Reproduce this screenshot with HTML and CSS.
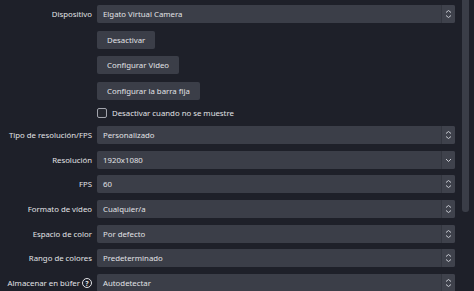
FILE: index.html
```html
<!DOCTYPE html>
<html lang="es">
<head>
<meta charset="utf-8">
<link rel="stylesheet" href="styles.css">
</head>
<body>
<div class="page">
  <div class="form">
    <div class="row r1">
      <div class="label">Dispositivo</div>
      <div class="combo"><span class="val">Elgato Virtual Camera</span><span class="arrow"><svg width="7" height="10" viewBox="0 0 7 10"><path d="M1 3.5 L3.5 1.5 L6 3.5 M1 6.5 L3.5 8.5 L6 6.5" fill="none" stroke="#c9cbd2" stroke-width="1"/></svg></span></div>
    </div>
    <div class="row r2">
      <div class="label"></div>
      <div class="btn">Desactivar</div>
    </div>
    <div class="row r3">
      <div class="label"></div>
      <div class="btn">Configurar Video</div>
    </div>
    <div class="row r4">
      <div class="label"></div>
      <div class="btn">Configurar la barra fija</div>
    </div>
    <div class="row rcheck">
      <div class="label"></div>
      <div class="check"><span class="box"></span><span>Desactivar cuando no se muestre</span></div>
    </div>
    <div class="row r6">
      <div class="label">Tipo de resolución/FPS</div>
      <div class="combo"><span class="val">Personalizado</span><span class="arrow"><svg width="7" height="10" viewBox="0 0 7 10"><path d="M1 3.5 L3.5 1.5 L6 3.5 M1 6.5 L3.5 8.5 L6 6.5" fill="none" stroke="#c9cbd2" stroke-width="1"/></svg></span></div>
    </div>
    <div class="row rn">
      <div class="label">Resolución</div>
      <div class="combo"><span class="val">1920x1080</span><span class="arrow"><svg width="7" height="10" viewBox="0 0 7 10"><path d="M1 4 L3.5 6.5 L6 4" fill="none" stroke="#c9cbd2" stroke-width="1"/></svg></span></div>
    </div>
    <div class="row rn">
      <div class="label">FPS</div>
      <div class="combo"><span class="val">60</span><span class="arrow"><svg width="7" height="10" viewBox="0 0 7 10"><path d="M1 3.5 L3.5 1.5 L6 3.5 M1 6.5 L3.5 8.5 L6 6.5" fill="none" stroke="#c9cbd2" stroke-width="1"/></svg></span></div>
    </div>
    <div class="row rn">
      <div class="label">Formato de vídeo</div>
      <div class="combo"><span class="val">Cualquier/a</span><span class="arrow"><svg width="7" height="10" viewBox="0 0 7 10"><path d="M1 3.5 L3.5 1.5 L6 3.5 M1 6.5 L3.5 8.5 L6 6.5" fill="none" stroke="#c9cbd2" stroke-width="1"/></svg></span></div>
    </div>
    <div class="row rn">
      <div class="label">Espacio de color</div>
      <div class="combo"><span class="val">Por defecto</span><span class="arrow"><svg width="7" height="10" viewBox="0 0 7 10"><path d="M1 3.5 L3.5 1.5 L6 3.5 M1 6.5 L3.5 8.5 L6 6.5" fill="none" stroke="#c9cbd2" stroke-width="1"/></svg></span></div>
    </div>
    <div class="row rn">
      <div class="label">Rango de colores</div>
      <div class="combo"><span class="val">Predeterminado</span><span class="arrow"><svg width="7" height="10" viewBox="0 0 7 10"><path d="M1 3.5 L3.5 1.5 L6 3.5 M1 6.5 L3.5 8.5 L6 6.5" fill="none" stroke="#c9cbd2" stroke-width="1"/></svg></span></div>
    </div>
    <div class="row rn">
      <div class="label">Almacenar en búfer <span class="help">?</span></div>
      <div class="combo"><span class="val">Autodetectar</span><span class="arrow"><svg width="7" height="10" viewBox="0 0 7 10"><path d="M1 3.5 L3.5 1.5 L6 3.5 M1 6.5 L3.5 8.5 L6 6.5" fill="none" stroke="#c9cbd2" stroke-width="1"/></svg></span></div>
    </div>
  </div>
  <div class="scroll"><div class="thumb"></div></div>
</div>
</body>
</html>
```
FILE: styles.css
```css
html, body {
  margin: 0;
  padding: 0;
  background: #1e2029;
  overflow: hidden;
}
.page {
  display: flex;
  width: 474px;
  height: 291px;
  font-family: "Noto Sans", "Open Sans", sans-serif;
  font-size: 7.8px;
  color: #e1e2e6;
}
.form {
  width: 455px;
  padding-top: 5px;
  display: flex;
  flex-direction: column;
}
.row {
  display: flex;
  align-items: center;
  height: 18px;
  flex-shrink: 0;
}
.r2 { margin-top: 7.5px; }
.r3 { margin-top: 7.5px; }
.r4 { margin-top: 8px; }
.rcheck { margin-top: 5px; height: 16px; }
.r6 { margin-top: 5px; }
.rn { margin-top: 6.7px; }
.label {
  width: 92px;
  margin-right: 5px;
  text-align: right;
  white-space: nowrap;
  display: flex;
  justify-content: flex-end;
  align-items: center;
  gap: 2px;
}
.combo {
  flex: 1;
  height: 18px;
  background: #3b3e48;
  border-radius: 2px;
  display: flex;
  align-items: center;
  overflow: hidden;
}
.val {
  flex: 1;
  padding-left: 6px;
  white-space: nowrap;
}
.arrow {
  width: 13px;
  height: 18px;
  background: #3f424c;
  border-left: 1px solid #33363f;
  display: flex;
  align-items: center;
  justify-content: center;
}
.btn {
  height: 18px;
  padding: 0 10px;
  background: #3b3e48;
  border-radius: 2px;
  display: flex;
  align-items: center;
  white-space: nowrap;
}
.check {
  display: flex;
  align-items: center;
  gap: 5px;
  white-space: nowrap;
}
.box {
  width: 8px;
  height: 8px;
  border: 1px solid #a3a5ad;
  border-radius: 2px;
  background: #24262e;
}
.help {
  width: 8px;
  height: 8px;
  border: 1px solid #e1e2e6;
  border-radius: 50%;
  font-size: 7px;
  font-weight: bold;
  display: inline-flex;
  align-items: center;
  justify-content: center;
  line-height: 1;
}
.scroll {
  width: 7px;
  margin-left: 7px;
  height: 291px;
}
.thumb {
  height: 212px;
  background: #3a3d47;
  border-radius: 0 0 3px 3px;
}
```
